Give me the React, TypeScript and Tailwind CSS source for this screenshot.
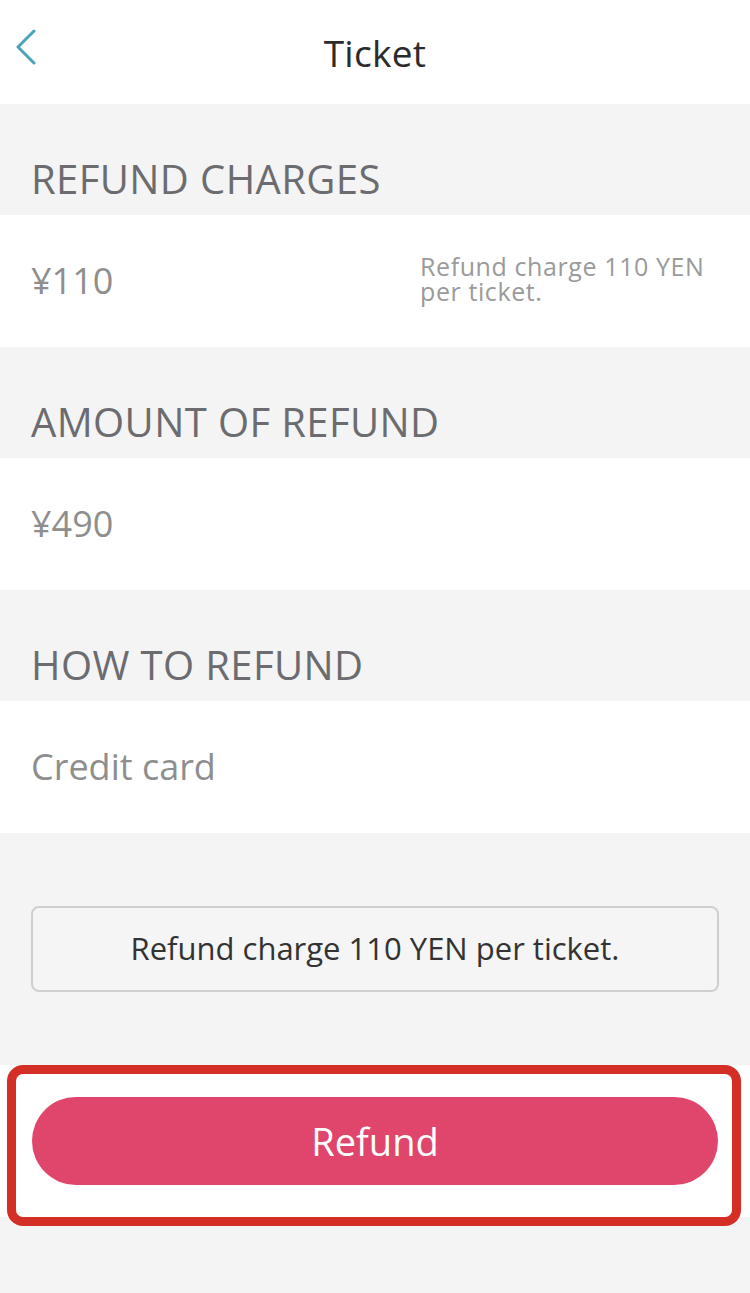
import React from "react";

const font = { fontFamily: '"Open Sans", "Noto Sans", "Noto Sans CJK JP", sans-serif' };

function Heading({ children }: { children: React.ReactNode }) {
  return (
    <div className="h-[111px] bg-[#f4f4f4] flex items-end px-[31px] pb-[11px] shrink-0">
      <span className="text-[40px] leading-[50px] text-[#6c6c70] tracking-[0.4px]">{children}</span>
    </div>
  );
}

export default function App() {
  return (
    <div className="w-[750px] h-[1293px] bg-[#f4f4f4] flex flex-col" style={font}>
      <header className="h-[104px] bg-white relative flex items-center justify-center shrink-0">
        <svg className="absolute left-[14px] top-[29px]" width="24" height="36" viewBox="0 0 24 36" fill="none">
          <path d="M20 2 L4 18 L20 34" stroke="#4aa3b8" strokeWidth="3" strokeLinecap="round" strokeLinejoin="round" />
        </svg>
        <h1 className="text-[37px] text-[#2b2b2b] leading-none tracking-[0.3px]">Ticket</h1>
      </header>

      <Heading>REFUND CHARGES</Heading>
      <div className="h-[132px] bg-white flex items-center px-[31px] shrink-0">
        <span className="text-[36px] text-[#8e8e8e] w-[389px]">¥110</span>
        <div className="flex flex-col text-[25px] leading-[25px] text-[#9a9a9a] tracking-[0.6px] pb-[4px]">
          <span>Refund charge 110 YEN</span>
          <span>per ticket.</span>
        </div>
      </div>

      <Heading>AMOUNT OF REFUND</Heading>
      <div className="h-[132px] bg-white flex items-center px-[31px] shrink-0">
        <span className="text-[36px] text-[#8e8e8e]">¥490</span>
      </div>

      <Heading>HOW TO REFUND</Heading>
      <div className="h-[132px] bg-white flex items-center px-[31px] shrink-0">
        <span className="text-[36px] text-[#8e8e8e]">Credit card</span>
      </div>

      <div className="h-[232px] flex flex-col pt-[73px] px-[31px] shrink-0">
        <div className="h-[86px] border-2 border-[#cfcfcf] rounded-[8px] bg-[#f5f5f5] flex items-center justify-center">
          <span className="text-[31px] text-[#333333] pb-[2px]">Refund charge 110 YEN per ticket.</span>
        </div>
      </div>

      <div className="h-[152px] bg-white relative flex items-start pt-[32px] px-[32px] shrink-0">
        <button className="w-full h-[88px] rounded-full bg-[#e0456b] text-white text-[38px] flex items-center justify-center">
          Refund
        </button>
        <div className="absolute left-[7px] right-[9px] top-0 bottom-[-9px] border-[9px] border-[#d42f27] rounded-[16px] pointer-events-none" />
      </div>
    </div>
  );
}
